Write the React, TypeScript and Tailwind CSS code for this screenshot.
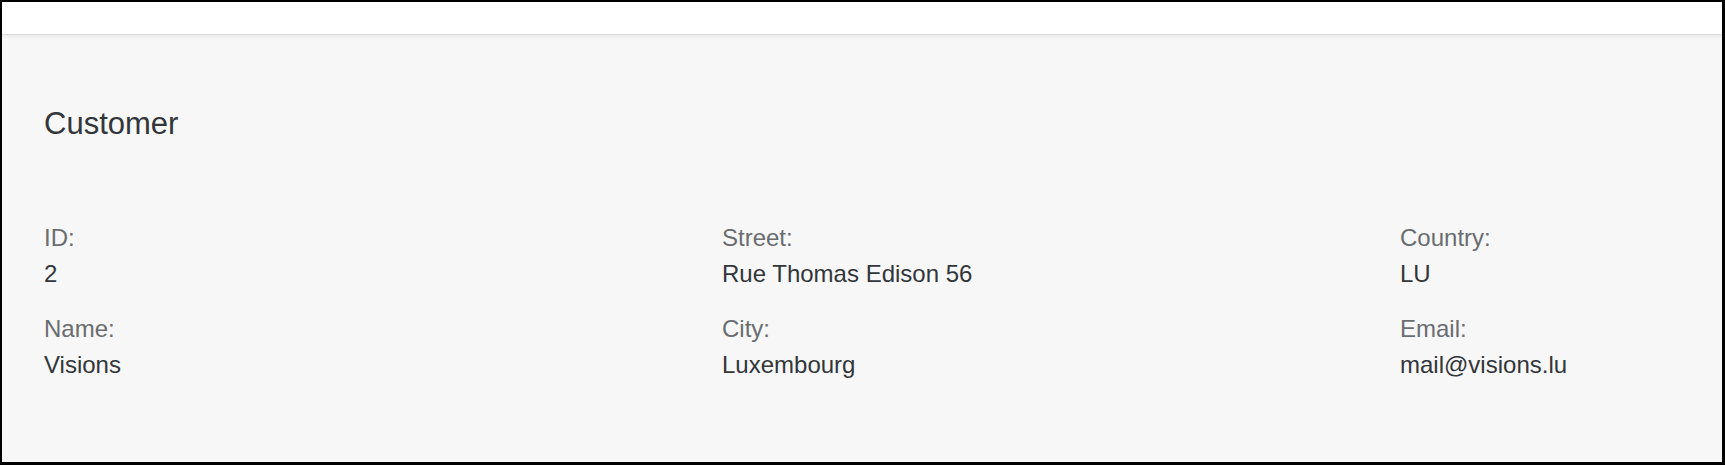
import React from "react";

type Field = { label: string; value: string };

const columns: Field[][] = [
  [
    { label: "ID:", value: "2" },
    { label: "Name:", value: "Visions" },
  ],
  [
    { label: "Street:", value: "Rue Thomas Edison 56" },
    { label: "City:", value: "Luxembourg" },
  ],
  [
    { label: "Country:", value: "LU" },
    { label: "Email:", value: "mail@visions.lu" },
  ],
];

function App() {
  return (
    <div
      className="w-[1725px] h-[465px] border-2 border-r-[3px] border-b-[3px] border-black bg-[#f7f7f7] flex flex-col overflow-hidden"
      style={{ fontFamily: '"Liberation Sans", Arial, sans-serif' }}
    >
      <div className="h-[32px] shrink-0 bg-white shadow-[0_1px_0_#dcdcdc,0_2px_4px_rgba(0,0,0,0.08)] relative z-10" />

      <div className="px-[42px] pt-[72px]">
        <h2 className="text-[31px] leading-[36px] text-[#32363a]">Customer</h2>

        <div className="grid grid-cols-[678px_678px_1fr] mt-[78px]">
          {columns.map((col, idx) => (
            <div key={idx} className="flex flex-col gap-[19px]">
              {col.map((f) => (
                <div key={f.label} className="flex flex-col">
                  <span className="text-[24px] leading-[36px] text-[#6a6d70]">
                    {f.label}
                  </span>
                  <span className="text-[24px] leading-[36px] text-[#32363a]">
                    {f.value}
                  </span>
                </div>
              ))}
            </div>
          ))}
        </div>
      </div>
    </div>
  );
}

export default App;
